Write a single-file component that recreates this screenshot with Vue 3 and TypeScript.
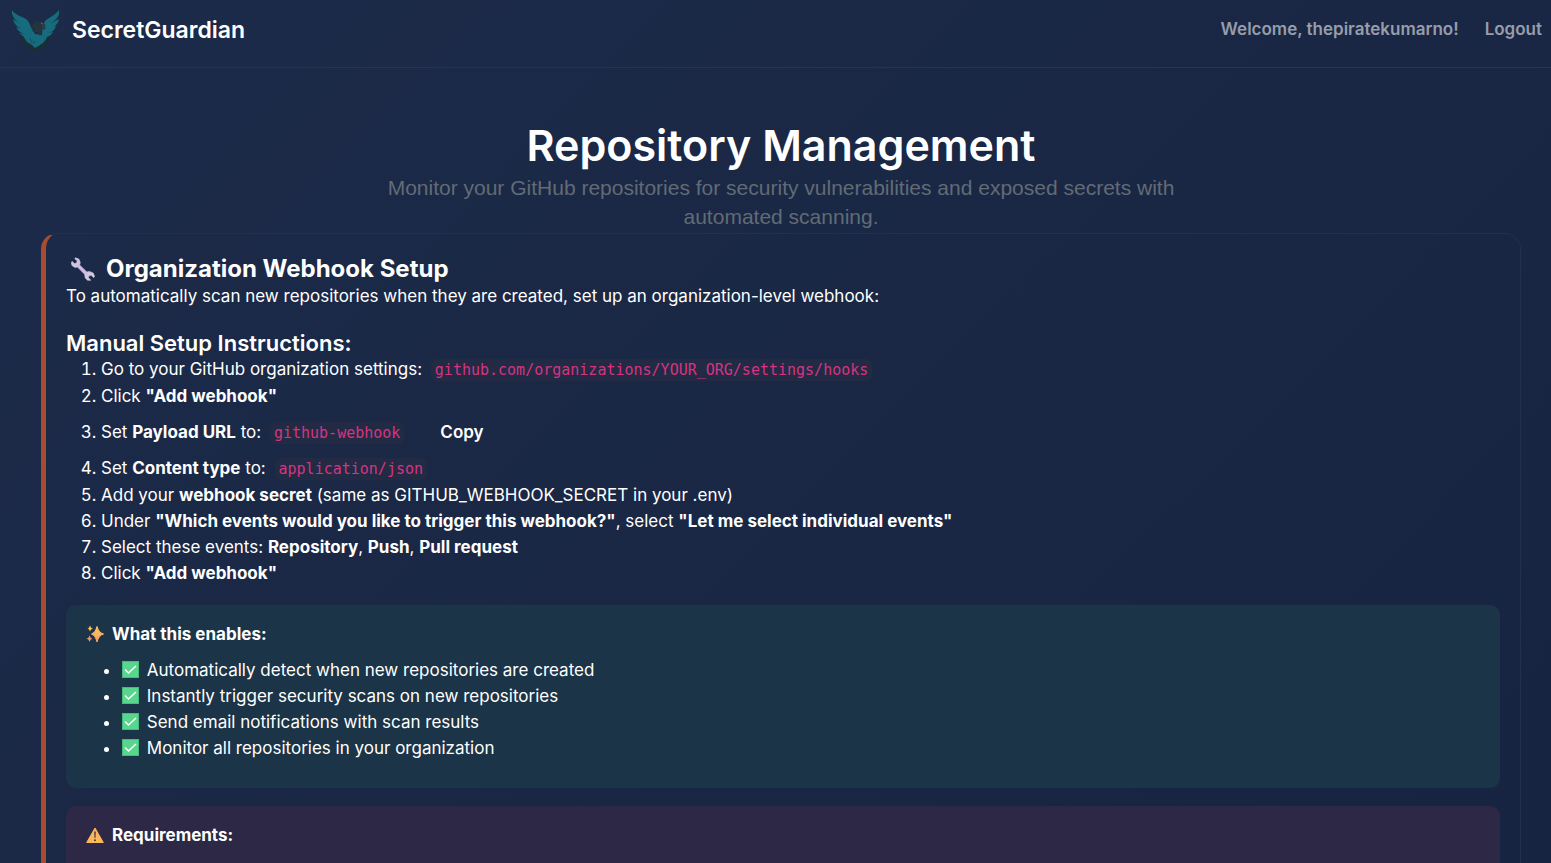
<script setup lang="ts">
import { ref } from 'vue'

interface Part {
  text: string
  kind?: 'strong' | 'code'
}

interface Step {
  parts: Part[]
  copy?: string
}

const userName = 'thepiratekumarno'

const steps: Step[] = [
  {
    parts: [
      { text: 'Go to your GitHub organization settings: ' },
      { text: 'github.com/organizations/YOUR_ORG/settings/hooks', kind: 'code' },
    ],
  },
  { parts: [{ text: 'Click ' }, { text: '"Add webhook"', kind: 'strong' }] },
  {
    parts: [
      { text: 'Set ' },
      { text: 'Payload URL', kind: 'strong' },
      { text: ' to: ' },
      { text: 'github-webhook', kind: 'code' },
    ],
    copy: 'github-webhook',
  },
  {
    parts: [
      { text: 'Set ' },
      { text: 'Content type', kind: 'strong' },
      { text: ' to: ' },
      { text: 'application/json', kind: 'code' },
    ],
  },
  {
    parts: [
      { text: 'Add your ' },
      { text: 'webhook secret', kind: 'strong' },
      { text: ' (same as GITHUB_WEBHOOK_SECRET in your .env)' },
    ],
  },
  {
    parts: [
      { text: 'Under ' },
      { text: '"Which events would you like to trigger this webhook?"', kind: 'strong' },
      { text: ', select ' },
      { text: '"Let me select individual events"', kind: 'strong' },
    ],
  },
  {
    parts: [
      { text: 'Select these events: ' },
      { text: 'Repository', kind: 'strong' },
      { text: ', ' },
      { text: 'Push', kind: 'strong' },
      { text: ', ' },
      { text: 'Pull request', kind: 'strong' },
    ],
  },
  { parts: [{ text: 'Click ' }, { text: '"Add webhook"', kind: 'strong' }] },
]

const benefits: string[] = [
  'Automatically detect when new repositories are created',
  'Instantly trigger security scans on new repositories',
  'Send email notifications with scan results',
  'Monitor all repositories in your organization',
]

const copyLabel = ref('Copy')

async function copy(value: string): Promise<void> {
  await navigator.clipboard.writeText(value)
  copyLabel.value = 'Copied'
}
</script>

<template>
  <div class="page">
    <header class="topbar">
      <a class="brand" href="#">
        <svg class="logo" viewBox="5 3 50 46" aria-hidden="true">
          <path d="M17 31 L20 38 L29 44 L40 38 L42 31 L45 32 L43 39 L38 44 L29 49 L21 44 L16 39 L15 32 Z" fill="#182e39" />
          <path
            d="M6 6 C9 11 15 12 20 15 C24 18 24 22 26 25 L29 30 L36 31 C36 27 37 22 38 19 C40 14 48 13 53 6 C54 12 51 15 45 19 L53 15 C52 20 49 23 44 24 L50 22 C48 27 46 28 42 29 L47 28 C45 32 43 32 41 33 C40 37 35 41 29 44 L26 41 L21 38 L17 32 L13 29 L18 30 C14 28 12 27 10 23 L16 25 C11 23 8 20 7 15 L15 20 C9 16 5 12 6 6 Z"
            fill="#166c7c"
          />
          <path d="M24 34 L26 39 L28 37 L29 40" fill="none" stroke="#1b4f62" stroke-width="1" />
          <path d="M26 24 C26 18 31 16 36 18 C39 19 40 22 39 26 L36 24 L36 28 L34 32 L32 28 L26 28 L29 25 Z" fill="#26343f" />
          <path d="M36 20 L39 22 L39 25 L36 23 Z" fill="#343d46" />
          <path d="M35 19 L37 20" stroke="#59636a" stroke-width="1" />
        </svg>
        <span>SecretGuardian</span>
      </a>
      <nav class="account">
        <span>Welcome, {{ userName }}!</span>
        <a href="#">Logout</a>
      </nav>
    </header>

    <main class="content">
      <div class="hero">
        <h1>Repository Management</h1>
        <p>Monitor your GitHub repositories for security vulnerabilities and exposed secrets with automated scanning.</p>
      </div>

      <section class="card">
        <h2>
          <svg class="wrench" viewBox="0 0 24 24" aria-hidden="true">
            <defs>
              <linearGradient id="steel" x1="0" y1="0" x2="1" y2="1">
                <stop offset="0" stop-color="#d5d0dc" />
                <stop offset="0.5" stop-color="#cdb9e4" />
                <stop offset="1" stop-color="#d8d4df" />
              </linearGradient>
            </defs>
            <path
              d="M4.6 .8 L8 2.2 L9.3 5.6 L8.6 8 L15.8 14.9 L18.3 14.4 L22.2 16 L23.6 19.4 L22.7 20.6 L20.2 18.3 L17.9 18.8 L17.4 20.8 L19.8 23.2 L16.6 23.2 L14.2 21 L13.6 17.2 L6.4 10.1 L4 10.5 L1 8.6 L.2 5.4 L1.1 4.4 L3.4 6.6 L5.6 6 L6.2 3.8 L3.7 1.6 Z"
              fill="url(#steel)"
              stroke="url(#steel)"
              stroke-width="0.6"
            />
          </svg>
          <span>Organization Webhook Setup</span>
        </h2>
        <p class="lead">To automatically scan new repositories when they are created, set up an organization-level webhook:</p>

        <h3>Manual Setup Instructions:</h3>
        <ol class="steps">
          <li v-for="(step, i) in steps" :key="i">
            <template v-for="(part, j) in step.parts" :key="j">
              <strong v-if="part.kind === 'strong'">{{ part.text }}</strong>
              <code v-else-if="part.kind === 'code'">{{ part.text }}</code>
              <template v-else>{{ part.text }}</template>
            </template>
            <button v-if="step.copy" type="button" class="copy" @click="copy(step.copy)">{{ copyLabel }}</button>
          </li>
        </ol>

        <div class="note note-success">
          <h4>
            <svg class="glyph" viewBox="0 0 18 18" aria-hidden="true">
              <defs>
                <linearGradient id="spark" x1="0" y1="0" x2="0" y2="1">
                  <stop offset="0" stop-color="#fccb5c" />
                  <stop offset="1" stop-color="#fb9a62" />
                </linearGradient>
              </defs>
              <path d="M11 1.500 Q12.500 7.500 17.500 9 Q12.500 10.500 11 17 Q9.500 10.500 5.500 9 Q9.500 7.500 11 1.500 Z" fill="url(#spark)" stroke="url(#spark)" stroke-linejoin="round" />
              <path d="M4 .5 Q4.500 3 7 3.500 Q4.500 4 4 6.500 Q3.500 4 1.500 3.500 Q3.500 3 4 .5 Z" fill="#fbc25d" />
              <path d="M3.500 10.500 Q4 13 6.500 13.500 Q4 14 3.500 17 Q3 14 .5 13.500 Q3 13 3.500 10.500 Z" fill="#fb9062" />
            </svg>
            <span>What this enables:</span>
          </h4>
          <ul>
            <li v-for="benefit in benefits" :key="benefit">
              <svg class="check" viewBox="0 0 17 17" aria-hidden="true">
                <rect width="17" height="17" fill="#44bd7b" />
                <rect x="1" y="1" width="15" height="15" fill="#58d68d" />
                <path d="M3 8.500 L6.500 12 L14 5" fill="none" stroke="#fff" stroke-width="1.500" />
              </svg>
              {{ benefit }}
            </li>
          </ul>
        </div>

        <div class="note note-warning">
          <h4>
            <svg class="glyph" viewBox="0 0 18 18" aria-hidden="true">
              <path d="M9 2 L17.300 16.500 H.7 Z" fill="#fdb75b" stroke="#fdb75b" stroke-linejoin="round" />
              <path d="M8.200 5.500 H9.800 L9.500 12 H8.500 Z" fill="#4a3b40" />
              <circle cx="9" cy="14.200" r="1" fill="#4a3b40" />
            </svg>
            <span>Requirements:</span>
          </h4>
        </div>
      </section>
    </main>
  </div>
</template>

<style>
body {
  margin: 0;
  background: #1b2946;
}
</style>

<style scoped>
.page {
  height: 100vh;
  overflow: hidden;
  background: linear-gradient(135deg, #1c2b49 0%, #172441 100%);
  color: #fff;
  font-family: Inter, 'Liberation Sans', sans-serif;
  font-size: 17px;
  line-height: 26px;
}

.topbar {
  display: flex;
  align-items: center;
  justify-content: space-between;
  height: 67px;
  padding: 0 9px 0 11px;
  border-bottom: 1px solid #26344e;
}

.brand {
  display: flex;
  align-items: center;
  gap: 11px;
  padding-bottom: 7px;
  color: #fff;
  font-size: 23px;
  font-weight: 600;
  text-decoration: none;
}

.logo {
  width: 50px;
  height: 46px;
}

.account {
  display: flex;
  gap: 26px;
  padding-bottom: 9px;
  color: #979daa;
  font-weight: 600;
}

.account a {
  color: inherit;
  text-decoration: none;
}

.content {
  padding: 50px 30px 0 41px;
}

.hero {
  max-width: 800px;
  margin: 0 auto;
  text-align: center;
}

h1,
h2,
h3,
h4,
p {
  margin: 0;
}

h1 {
  font-size: 43px;
  font-weight: 600;
  line-height: 55px;
}

.hero p {
  padding-bottom: 2px;
  color: #626b74;
  font-family: 'Liberation Sans', Arial, sans-serif;
  font-size: 21px;
  line-height: 29px;
}

.card {
  padding: 20px 20px 40px;
  border: 1px solid #22304a;
  border-left: 5px solid #a84b2f;
  border-radius: 16px;
}

h2 {
  display: flex;
  align-items: center;
  gap: 11px;
  padding-left: 5px;
  font-size: 24px;
  font-weight: 700;
  line-height: 29px;
}

.wrench {
  width: 24px;
  height: 24px;
}

h3 {
  margin-top: 21px;
  font-size: 22px;
  font-weight: 600;
  line-height: 26px;
}

.steps {
  margin: 0 0 19px;
  padding-left: 35px;
}

code {
  margin-left: 4px;
  padding: 2px 4px;
  border-radius: 6px;
  background: #222b43;
  color: #d63384;
  font-family: 'DejaVu Sans Mono', monospace;
  font-size: 15px;
}

strong {
  font-weight: 700;
}

.copy {
  margin-left: 4px;
  padding: 10px 32px;
  border: 0;
  background: transparent;
  color: inherit;
  font: inherit;
  font-weight: 600;
}

.note {
  margin-bottom: 18px;
  padding: 18px 20px 27px;
  border-radius: 10px;
}

.note-success {
  background: #1c3447;
}

.note-warning {
  background: #2d2845;
}

h4 {
  display: flex;
  align-items: center;
  gap: 8px;
  font-size: 17px;
  font-weight: 700;
  line-height: 22px;
}

.glyph {
  width: 18px;
  height: 18px;
}

ul {
  margin: 12px 0 0;
  padding-left: 35px;
}

.check {
  width: 17px;
  height: 17px;
  margin: 0 3px 0 1px;
  vertical-align: -2px;
}
</style>
